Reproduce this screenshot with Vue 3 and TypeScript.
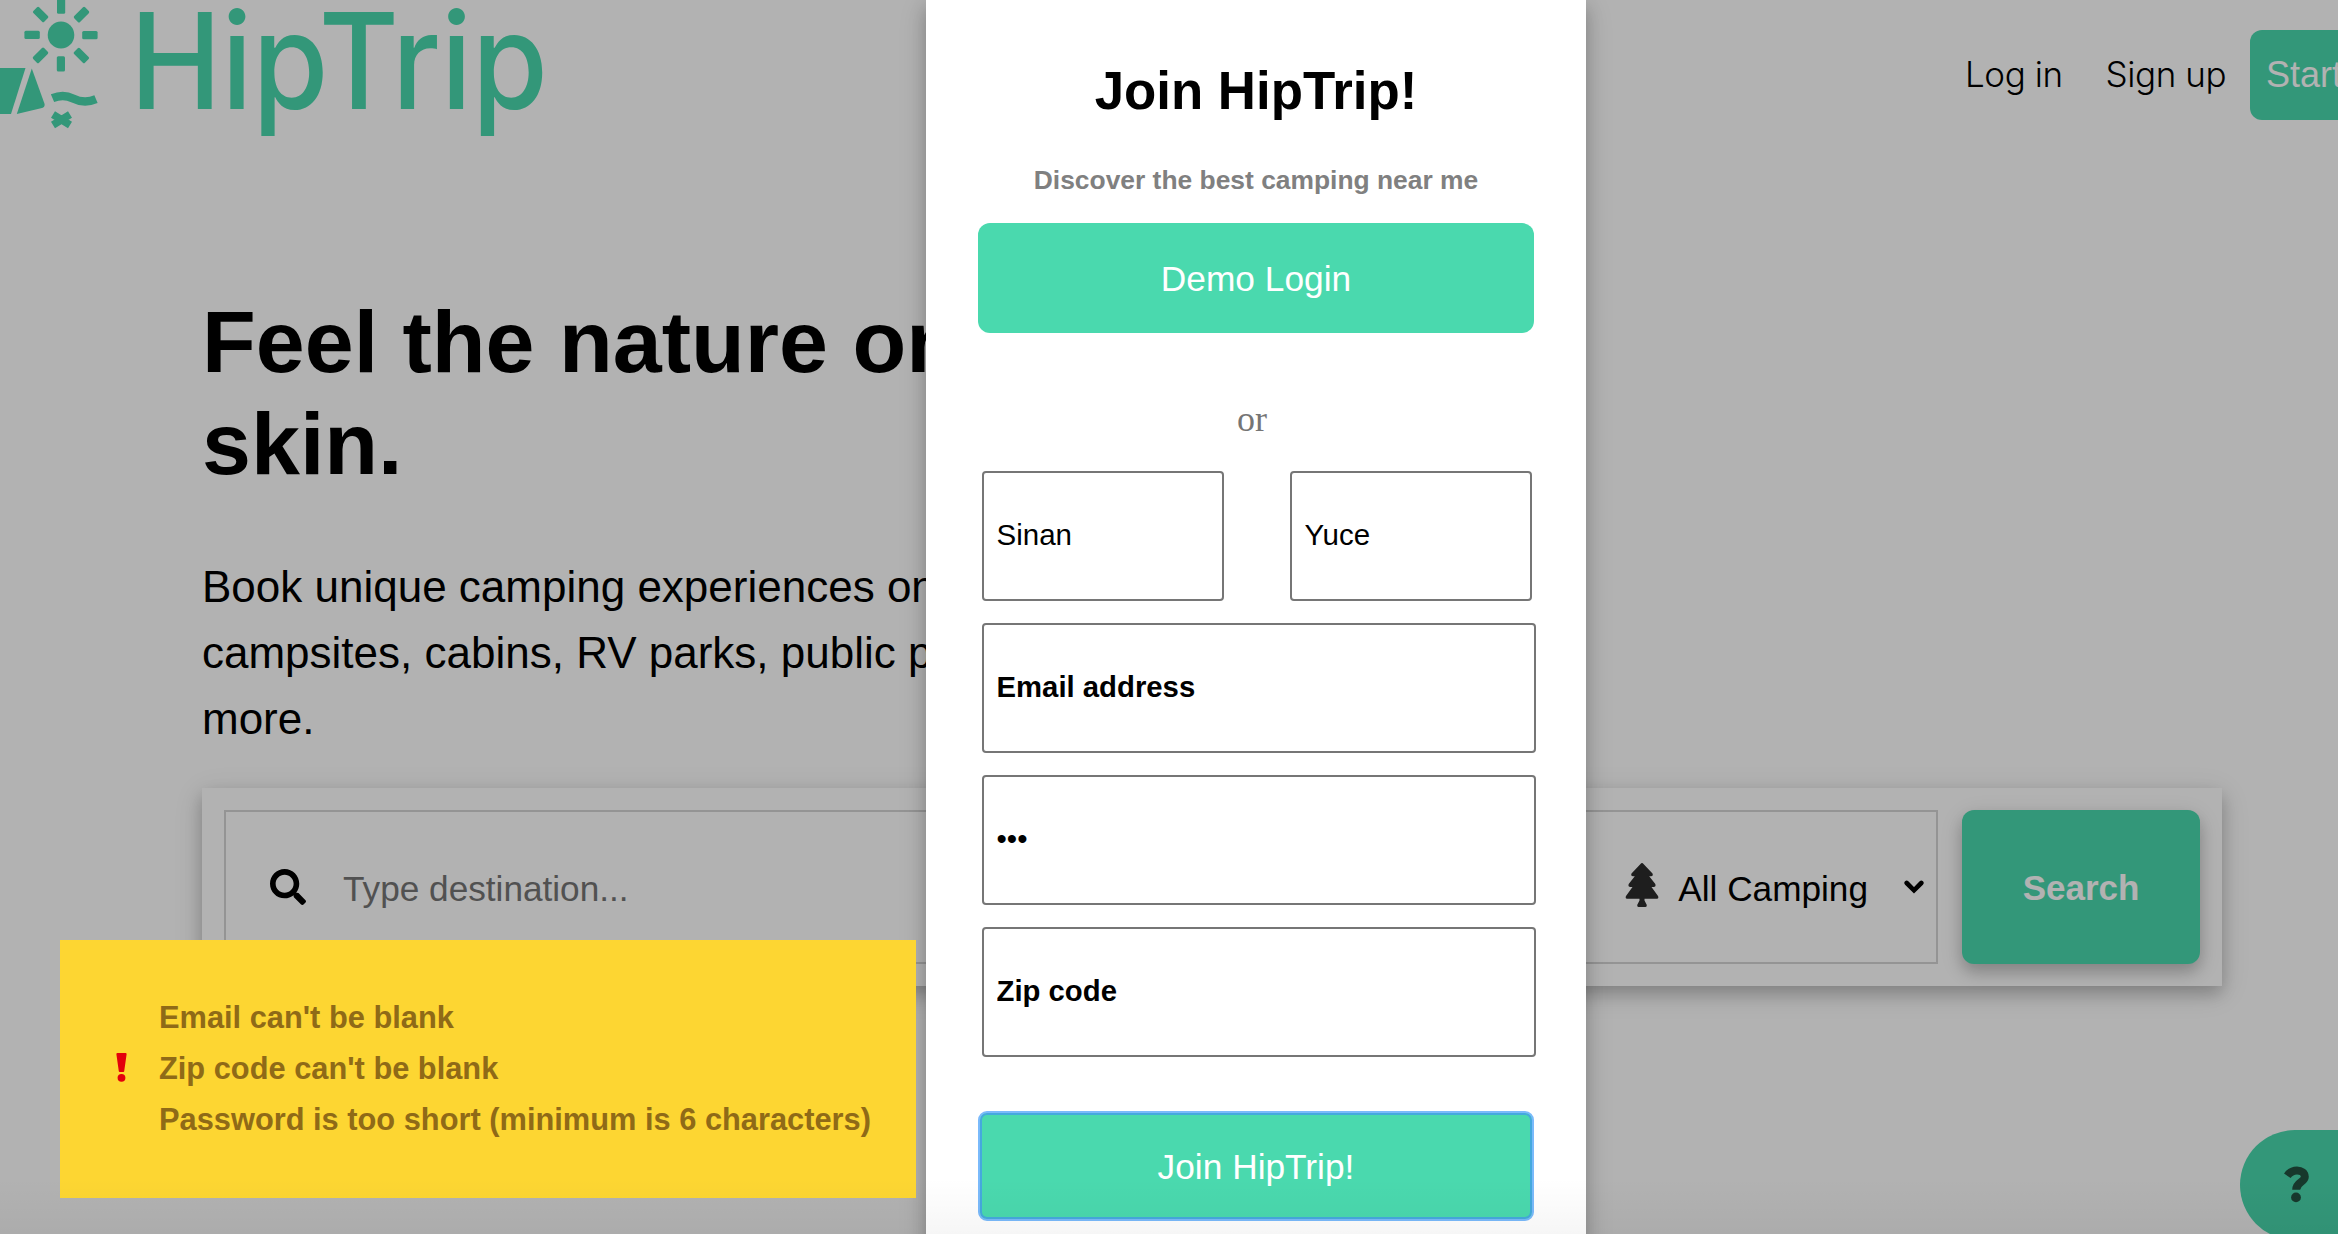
<script setup lang="ts">
import { ref } from 'vue'

interface Field {
  name: string
  value: string
  placeholder: string
}

const names = ref<Field[]>([
  { name: 'first', value: 'Sinan', placeholder: 'First name' },
  { name: 'last', value: 'Yuce', placeholder: 'Last name' },
])

const details = ref<Field[]>([
  { name: 'email', value: '', placeholder: 'Email address' },
  { name: 'password', value: '•••', placeholder: 'Password' },
  { name: 'zip', value: '', placeholder: 'Zip code' },
])

const errors: string[] = [
  "Email can't be blank",
  "Zip code can't be blank",
  'Password is too short (minimum is 6 characters)',
]

const rays: number[] = [0, 45, 90, 135, 180, 225, 270, 315]
</script>

<template>
  <div class="app">
    <div class="page">
      <header class="header">
        <svg class="logo" width="560" height="150" viewBox="0 0 560 150">
          <g fill="#4ad9ae">
            <ellipse cx="61" cy="35" rx="13.3" ry="13.6" />
            <rect
              v-for="r in rays"
              :key="r"
              x="82.2"
              y="31"
              width="15.4"
              height="8.2"
              rx="1.5"
              :transform="`rotate(${r} 61 35)`"
            />
            <path d="M0 68H25.5L11 114H0Z" />
            <path d="M31.8 68.5L44.6 104Q45 107 42 108L16.8 114Z" />
          </g>
          <g fill="none" stroke="#4ad9ae">
            <path d="M52.500 98.200C60 95 67 95.500 73 98.500S87 103 96 99.200" stroke-width="8.4" />
            <path d="M53 114.500L70 125M70 114.500L53 125" stroke-width="7.6" />
          </g>
          <text
            class="wordmark"
            x="130"
            y="109"
            textLength="418"
            lengthAdjust="spacingAndGlyphs"
            fill="#4ad9ae"
          >HipTrip</text>
        </svg>
        <nav class="nav">
          <a class="link login">Log in</a>
          <a class="link signup">Sign up</a>
          <a class="start">Start</a>
        </nav>
      </header>

      <main class="hero">
        <h1>Feel the nature on your<br />skin.</h1>
        <p>
          Book unique camping experiences on over<br />campsites, cabins, RV parks, public parks and<br />more.
        </p>
        <div class="bar">
          <div class="fields">
            <svg class="magnifier" width="36" height="36" viewBox="0 0 512 512">
              <path
                d="M505 442.700L405.300 343c-4.500-4.500-10.600-7-17-7H372c27.600-35.300 44-79.700 44-128C416 93.100 322.900 0 208 0S0 93.100 0 208s93.100 208 208 208c48.300 0 92.700-16.400 128-44v16.300c0 6.400 2.500 12.500 7 17l99.700 99.700c9.400 9.400 24.600 9.400 33.900 0l28.300-28.300c9.400-9.400 9.400-24.600.1-34zM208 336c-70.700 0-128-57.200-128-128 0-70.700 57.200-128 128-128 70.700 0 128 57.200 128 128 0 70.700-57.200 128-128 128z"
              />
            </svg>
            <span class="hint">Type destination...</span>
            <svg class="tree" width="34" height="44" viewBox="0 0 34 44">
              <path
                d="M17 0Q17.800 0 18.500 .900L27.500 10.500Q28.500 13 26 13.200H24.200L30.300 21Q31.300 24 28.500 24H26.500L33 33Q34 35.500 32 35.700H19.500V37.500L21.800 42Q22 44 20.500 44H13.500Q12 44 12.200 42L14.500 37.500V35.700H2Q0 35.500 1 33L7.500 24H5.500Q2.700 24 3.700 21L9.800 13.200H8Q5.500 13 6.500 10.500L15.500 .900Q16.200 0 17 0Z"
              />
            </svg>
            <span class="kind">All Camping</span>
            <svg class="chevron" width="20" height="14" viewBox="0 0 20 14">
              <path d="M2.700 3L10 10.300L17.300 3" />
            </svg>
          </div>
          <button class="search" type="button">Search</button>
        </div>
      </main>

      <div class="help">
        <svg width="26" height="37" viewBox="0 0 26 37">
          <path
            d="M3.300 9.800C6 5.900 9.300 4.500 13 4.500C17.300 4.500 20.800 6.900 20.800 10.800C20.800 16.500 12.200 15.700 12.200 23.800"
            fill="none"
            stroke="#21513f"
            stroke-width="8"
          />
          <circle cx="12" cy="31.400" r="4.900" fill="#21513f" />
        </svg>
      </div>
    </div>

    <div class="overlay">
      <section class="modal">
        <h2>Join HipTrip!</h2>
        <h3>Discover the best camping near me</h3>
        <button class="action" type="button">Demo Login</button>
        <div class="or">or</div>
        <form class="form">
          <div class="row">
            <input
              v-for="f in names"
              :key="f.name"
              v-model="f.value"
              type="text"
              :placeholder="f.placeholder"
            />
          </div>
          <input
            v-for="f in details"
            :key="f.name"
            v-model="f.value"
            type="text"
            :placeholder="f.placeholder"
          />
        </form>
        <button class="action focused" type="button">Join HipTrip!</button>
      </section>

      <aside class="alert">
        <svg class="bang" width="11" height="29" viewBox="0 0 11 29">
          <path d="M1.400 0H9.600Q10.700 0 10.600 1.200L8.200 18.200Q8.100 19 7.400 19H3.600Q2.900 19 2.800 18.200L.400 1.200Q.300 0 1.400 0Z" />
          <circle cx="5.500" cy="24.800" r="3.900" />
        </svg>
        <ul>
          <li v-for="e in errors" :key="e">{{ e }}</li>
        </ul>
      </aside>
    </div>
    <div class="fade"></div>
  </div>
</template>

<style>
body {
  overflow: hidden;
}
</style>

<style scoped>
* {
  box-sizing: border-box;
}
.app {
  position: relative;
  width: 2338px;
  height: 1234px;
  overflow: hidden;
  background: #fff;
  font-family: 'Liberation Sans', Arial, Helvetica, sans-serif;
}
.page {
  position: relative;
  height: 1234px;
  overflow: hidden;
}
.header {
  display: flex;
  height: 150px;
}
.logo {
  flex: none;
  display: block;
}
.wordmark {
  font-family: Inter, sans-serif;
  font-size: 134px;
  font-weight: 500;
}
.nav {
  flex: none;
  display: flex;
  align-items: center;
  height: 90px;
  margin-top: 30px;
  margin-left: 1405px;
}
.link {
  flex: none;
  margin-bottom: 3px;
  font-family: Inter, sans-serif;
  font-size: 35px;
  font-weight: 300;
  line-height: 42px;
  letter-spacing: -0.4px;
  color: #000;
}
.login {
  width: 140.5px;
}
.signup {
  width: 144.5px;
}
.start {
  flex: none;
  width: 130px;
  height: 90px;
  padding-left: 16px;
  border-radius: 12px;
  background: #4ad9ae;
  color: #fff;
  font-size: 36px;
  line-height: 90px;
}
.hero {
  padding: 140.5px 116px 0 202px;
}
h1 {
  margin: 0;
  font-size: 88px;
  line-height: 102px;
  font-weight: 700;
  white-space: nowrap;
}
.hero p {
  margin: 59.5px 0 36px;
  font-size: 44px;
  line-height: 66px;
  white-space: nowrap;
}
.bar {
  display: flex;
  gap: 24px;
  height: 198px;
  padding: 22px;
  background: #fff;
  box-shadow: 0 8px 16px rgba(0, 0, 0, 0.2), 0 6px 28px rgba(0, 0, 0, 0.12);
}
.fields {
  flex: 1;
  display: flex;
  align-items: center;
  border: 2px solid #d4d4d4;
  font-size: 35.2px;
}
.magnifier {
  margin-left: 44px;
}
.hint {
  margin-left: 37px;
  margin-top: 3px;
  color: #757575;
}
.tree {
  margin-left: auto;
  margin-top: -5px;
  fill: #2b2b2b;
}
.kind {
  margin: 3px 35.5px 0 19.5px;
  font-size: 35.2px;
}
.chevron {
  margin-right: 12.5px;
  margin-top: 0;
  fill: none;
  stroke: #000;
  stroke-width: 4.600;
  stroke-linecap: round;
}
.search {
  flex: none;
  width: 238px;
  padding-top: 3px;
  border: 0;
  border-radius: 12px;
  background: #4ad9ae;
  color: #fff;
  font: 700 35px 'Liberation Sans', Arial, sans-serif;
  box-shadow: 0 8px 16px rgba(0, 0, 0, 0.2), 0 6px 24px rgba(0, 0, 0, 0.1);
}
.help {
  position: absolute;
  left: 2240px;
  top: 1130px;
  width: 160px;
  height: 110px;
  padding: 36px 0 0 44px;
  border-radius: 55px;
  background: #4ad9ae;
}
.help svg {
  display: block;
}
.overlay {
  position: absolute;
  inset: 0;
  background: rgba(0, 0, 0, 0.3);
}
.modal {
  width: 660px;
  height: 1300px;
  margin-left: 926px;
  padding: 61px 52px 0;
  background: #fff;
  box-shadow: 0 8px 16px rgba(0, 0, 0, 0.2), 0 6px 28px rgba(0, 0, 0, 0.12);
}
h2 {
  margin: 0 0 44px;
  font-size: 52.8px;
  line-height: 60px;
  text-align: center;
}
h3 {
  margin: 0 0 28px;
  font-size: 26.4px;
  line-height: 30px;
  text-align: center;
  color: #808080;
}
.action {
  display: block;
  width: 556px;
  height: 110px;
  padding: 2px 0 0;
  border: 0;
  border-radius: 12px;
  background: #4ad9ae;
  color: #fff;
  font: 400 35.3px 'Liberation Sans', Arial, sans-serif;
}
.focused {
  margin-top: 54px;
  border: 2px solid #7abafb;
  border-radius: 9px;
  box-shadow: inset 0 0 0 2px #45a9dd;
}
.or {
  width: 548px;
  margin: 66px 0 32px;
  font-family: 'Liberation Serif', serif;
  font-size: 36px;
  line-height: 40px;
  text-align: center;
  color: #757575;
}
.form {
  display: flex;
  flex-direction: column;
  gap: 22px;
  width: 554px;
  margin-left: 4px;
}
.row {
  display: flex;
  gap: 66px;
}
.row input {
  width: 242px;
}
input {
  width: 554px;
  height: 130px;
  padding: 0 10px 3px 12.5px;
  border: 2px solid #767676;
  border-radius: 4px;
  outline: 0;
  background: #fff;
  color: #000;
  font: 400 29.5px 'Liberation Sans', Arial, sans-serif;
}
input::placeholder {
  color: #000;
  font-weight: 700;
  font-size: 29.3px;
  opacity: 1;
}
.alert {
  position: absolute;
  left: 60px;
  top: 940px;
  display: flex;
  width: 856px;
  height: 258px;
  background: #fdd632;
}
.bang {
  margin: 113px 32px 0 56px;
  fill: #e3000b;
}
ul {
  margin: 52px 0 0;
  padding: 0;
  list-style: none;
  color: #8f6a17;
  font-size: 30.8px;
  font-weight: 700;
  line-height: 51px;
  white-space: nowrap;
}
.fade {
  position: absolute;
  left: 0;
  right: 0;
  bottom: 0;
  height: 56px;
  background: linear-gradient(rgba(0, 0, 0, 0), rgba(0, 0, 0, 0.035));
}
</style>
